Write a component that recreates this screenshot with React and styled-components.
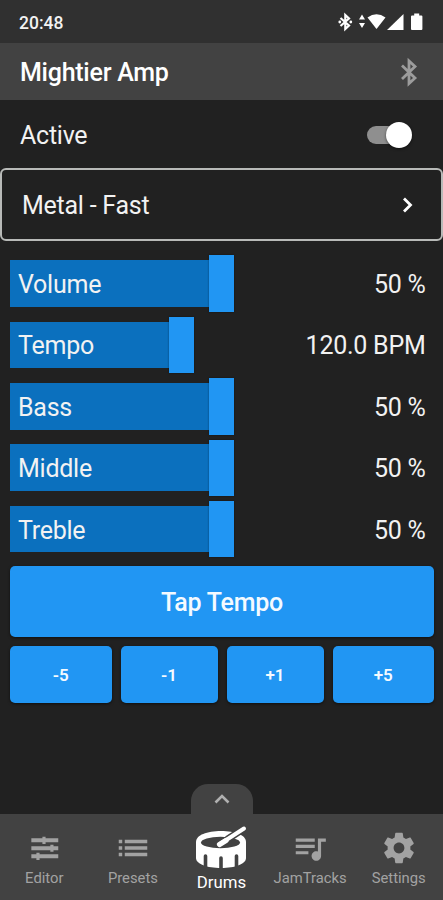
import React from "react";
import styled, { createGlobalStyle } from "styled-components";

const GlobalStyle = createGlobalStyle`
  * { box-sizing: border-box; }
  body { margin: 0; background: #212121; }
  button { border: 0; padding: 0; background: none; color: inherit; font: inherit; letter-spacing: inherit; }
`;

const Screen = styled.div`
  width: 443px;
  height: 900px;
  display: flex;
  flex-direction: column;
  overflow: hidden;
  background: #212121;
  color: #f2f2f2;
  font-family: Roboto, sans-serif;
  font-size: 25px;
  letter-spacing: -0.25px;
  white-space: nowrap;
`;

const StatusBar = styled.div`
  height: 43px;
  flex: none;
  display: flex;
  align-items: center;
  justify-content: space-between;
  padding: 2px 19px 0 19px;
  background: #303030;
  font-size: 17.5px;
  font-weight: 500;
  letter-spacing: 0;
`;

const StatusIcons = styled.svg`
  width: 88px;
  height: 20px;
  margin-bottom: 2px;
`;

const AppBar = styled.header`
  height: 57px;
  flex: none;
  display: flex;
  align-items: center;
  justify-content: space-between;
  padding: 0 20px;
  background: #424242;
`;

const Title = styled.h1`
  margin: 0;
  padding-top: 2px;
  font-size: 25px;
  font-weight: 500;
  color: #fff;
`;

const BluetoothIcon = styled.svg`
  width: 28px;
  height: 30px;
  color: #9c9c9c;
`;

const ActiveRow = styled.div`
  height: 68px;
  flex: none;
  display: flex;
  align-items: center;
  justify-content: space-between;
  padding: 2px 31px 0 20px;
`;

const SwitchTrack = styled.button`
  width: 43px;
  height: 18px;
  margin-right: 2px;
  display: flex;
  align-items: center;
  justify-content: flex-end;
  border-radius: 9px;
  background: #8f8f8f;
`;

const SwitchThumb = styled.span`
  flex: none;
  width: 26px;
  height: 26px;
  margin-right: -2px;
  border-radius: 50%;
  background: #fff;
  box-shadow: 0 1px 3px #0008;
`;

const StyleSelector = styled.button`
  width: 443px;
  height: 73px;
  flex: none;
  display: flex;
  align-items: center;
  justify-content: space-between;
  padding: 0 25px 0 20px;
  border: 2px solid #b8bab8;
  border-radius: 6px;
`;

const SelectorLabel = styled.span`
  padding-top: 2px;
`;

const Chevron = styled.svg`
  width: 16px;
  height: 18px;
`;

const SliderList = styled.div`
  display: flex;
  flex-direction: column;
  gap: 5px;
  padding: 14.4px 9px 0 10px;
`;

const SliderRow = styled.div`
  height: 56.4px;
  display: grid;
  align-items: center;
  & > * { grid-area: 1 / 1; }
`;

const SliderBar = styled.div`
  display: flex;
  align-items: center;
`;

const SliderFill = styled.div`
  height: 46.6px;
  background: #0b70be;
`;

const SliderThumb = styled.div`
  width: 25.2px;
  height: 56.4px;
  background: #2196f3;
  box-shadow: 0 0 2px #0006;
`;

const SliderText = styled.div`
  display: flex;
  justify-content: space-between;
  padding: 2px 8.5px 0 8px;
  z-index: 1;
`;

const ButtonArea = styled.div`
  display: flex;
  flex-direction: column;
  gap: 9.5px;
  padding: 9px 9px 0 10px;
`;

const BlueButton = styled.button`
  height: ${(p) => (p.$large ? "70.5px" : "57px")};
  padding-top: ${(p) => (p.$large ? "2px" : "0")};
  border-radius: 5px;
  background: #2196f3;
  color: #f4faff;
  font-size: ${(p) => (p.$large ? "25px" : "17px")};
  font-weight: ${(p) => (p.$large ? 500 : 600)};
  letter-spacing: ${(p) => (p.$large ? "-0.25px" : "0")};
  box-shadow: 0 1px 3px #0008;
`;

const StepRow = styled.div`
  display: grid;
  grid-template-columns: 101.5px 97px 97px 101.5px;
  justify-content: space-between;
`;

const Bottom = styled.footer`
  margin-top: auto;
  display: flex;
  flex-direction: column;
  align-items: center;
`;

const DrawerHandle = styled.button`
  width: 62px;
  height: 30px;
  display: flex;
  justify-content: center;
  padding-top: 9px;
  border-radius: 17px 17px 0 0;
  background: #424242;
  color: #b0b0b0;
`;

const HandleArrow = styled.svg`
  width: 18px;
  height: 12px;
`;

const NavBar = styled.nav`
  width: 443px;
  height: 86px;
  display: grid;
  grid-template-columns: repeat(5, 1fr);
  background: #424242;
`;

const NavItem = styled.button`
  display: flex;
  flex-direction: column;
  align-items: center;
  gap: ${(p) => (p.$active ? "2px" : "1px")};
  padding-top: ${(p) => (p.$active ? "9px" : "15px")};
  color: ${(p) => (p.$active ? "#fff" : "#a2a2a2")};
  font-size: ${(p) => (p.$active ? "16.8px" : "14.8px")};
  line-height: 20px;
  letter-spacing: 0;
`;

const NavIcon = styled.svg`
  width: 38px;
  height: 38px;
`;

const DrumIcon = styled.svg`
  width: 54px;
  height: 47px;
`;

const sliders = [
  { label: "Volume", value: "50 %", fill: 198.5 },
  { label: "Tempo", value: "120.0 BPM", fill: 159 },
  { label: "Bass", value: "50 %", fill: 198.5 },
  { label: "Middle", value: "50 %", fill: 198.5 },
  { label: "Treble", value: "50 %", fill: 198.5 },
];

const icons = {
  Editor: (
    <path d="M4 5.900h7v-1h2v1h8v2.500h-8v1h-2v-1H4zm0 5h12v-1h2v1h3v2.500h-3v1h-2v-1H4zm0 5.100h3.200v-1h2v1H21v2.500H9.200v1h-2v-1H4z" />
  ),
  Presets: (
    <path d="M3 13.100h2.200v-2.200H3zm0 4.100h2.200V15H3zM3 9h2.200V6.800H3zm3.800 4.100H21v-2.200H6.800zm0 4.100H21V15H6.800zm0-10.400V9H21V6.800z" />
  ),
  JamTracks: (
    <path d="M15 6H3v2h12V6zm0 4H3v2h12v-2zM3 16h8v-2H3v2zM17 6v8.180c-.31-.11-.65-.18-1-.18-1.660 0-3 1.340-3 3s1.340 3 3 3 3-1.340 3-3V8h3V6h-5z" />
  ),
  Settings: (
    <path d="M19.140 12.940c.04-.3.06-.61.06-.94 0-.32-.02-.64-.07-.94l2.030-1.580c.18-.14.23-.41.12-.61l-1.920-3.320c-.12-.22-.37-.29-.59-.22l-2.390.96c-.5-.38-1.030-.7-1.620-.94l-.36-2.540c-.04-.24-.24-.41-.48-.41h-3.840c-.24 0-.43.17-.47.41l-.36 2.540c-.59.24-1.130.57-1.620.94l-2.390-.96c-.22-.08-.47 0-.59.22L2.740 8.870c-.12.21-.08.47.12.61l2.030 1.580c-.05.3-.09.63-.09.94s.02.64.07.94l-2.030 1.580c-.18.14-.23.41-.12.61l1.920 3.320c.12.22.37.29.59.22l2.390-.96c.5.38 1.030.7 1.620.94l.36 2.540c.05.24.24.41.48.41h3.840c.24 0 .44-.17.47-.41l.36-2.540c.59-.24 1.130-.56 1.620-.94l2.390.96c.22.08.47 0 .59-.22l1.920-3.320c.12-.22.07-.47-.12-.61l-2.010-1.580zM12 15.400c-1.880 0-3.400-1.520-3.400-3.400s1.520-3.400 3.400-3.400 3.400 1.520 3.400 3.400-1.520 3.400-3.400 3.400z" />
  ),
};

function Drum() {
  return (
    <DrumIcon viewBox="0 0 54 47">
      <path
        fill="currentColor"
        d="M2 19C2 12 13 8 27 8s25 4 25 11v16c0 6-11 10-25 10S2 41 2 35z"
      />
      <ellipse cx="26.500" cy="19.500" rx="19.500" ry="5.800" fill="#424242" />
      <path d="M33 16.500L50 5.500" stroke="#424242" strokeWidth="7" />
      <path d="M26 21L50 5.500" stroke="currentColor" strokeWidth="4" strokeLinecap="round" />
      <path d="M25.500 21.500L32 17.500" stroke="currentColor" strokeWidth="5.200" strokeLinecap="round" />
      <path
        d="M11.500 33v11M27 35v11M42.500 33v11"
        stroke="#424242"
        strokeWidth="3.600"
        strokeLinecap="round"
      />
    </DrumIcon>
  );
}

function NavEntry({ label, active }) {
  return (
    <NavItem $active={active}>
      {active ? (
        <Drum />
      ) : (
        <NavIcon viewBox="0 0 24 24" fill="currentColor">
          {icons[label]}
        </NavIcon>
      )}
      <span>{label}</span>
    </NavItem>
  );
}

export default function App() {
  return (
    <>
      <GlobalStyle />
      <Screen>
        <StatusBar>
          <span>20:48</span>
          <StatusIcons viewBox="336 12 88 20" fill="#fff">
            <path
              d="M340.500 18l8.500 7.500-3.700 3.500V15l3.700 3.500-8.500 7.500"
              fill="none"
              stroke="#fff"
              strokeWidth="2.200"
            />
            <circle cx="339.800" cy="22" r="1.400" />
            <circle cx="350.800" cy="22" r="1.400" />
            <path d="M362 14.500l3 5h-6zM362 28l-3-5h6z" />
            <path d="M367.500 17.500Q376.500 11 385.500 17.500L376.500 29z" />
            <path d="M403.500 14V30h-16.500z" />
            <path d="M412 15.500h2.200v-2h5v2h2.200q1 0 1 1v12.500q0 1-1 1H412q-1 0-1-1V16.500q0-1 1-1z" />
          </StatusIcons>
        </StatusBar>
        <AppBar>
          <Title>Mightier Amp</Title>
          <BluetoothIcon viewBox="0 0 28 30" fill="none" stroke="currentColor" strokeWidth="2.800">
            <path d="M7 8.500l13 12.500-6 5.500V4L20 9.500l-13 12.500" />
          </BluetoothIcon>
        </AppBar>
        <ActiveRow>
          <span>Active</span>
          <SwitchTrack aria-label="Active">
            <SwitchThumb />
          </SwitchTrack>
        </ActiveRow>
        <StyleSelector>
          <SelectorLabel>Metal - Fast</SelectorLabel>
          <Chevron viewBox="0 0 16 18" fill="none" stroke="#fff" strokeWidth="2.800">
            <path d="M4 2.500l6.500 6.500L4 15.500" />
          </Chevron>
        </StyleSelector>
        <SliderList>
          {sliders.map(({ label, value, fill }) => (
            <SliderRow key={label}>
              <SliderBar>
                <SliderFill style={{ width: fill }} />
                <SliderThumb />
              </SliderBar>
              <SliderText>
                <span>{label}</span>
                <span>{value}</span>
              </SliderText>
            </SliderRow>
          ))}
        </SliderList>
        <ButtonArea>
          <BlueButton $large>Tap Tempo</BlueButton>
          <StepRow>
            <BlueButton>-5</BlueButton>
            <BlueButton>-1</BlueButton>
            <BlueButton>+1</BlueButton>
            <BlueButton>+5</BlueButton>
          </StepRow>
        </ButtonArea>
        <Bottom>
          <DrawerHandle aria-label="Expand">
            <HandleArrow viewBox="0 0 18 12" fill="none" stroke="currentColor" strokeWidth="2.600">
              <path d="M2.500 9.500L9 3l6.500 6.500" />
            </HandleArrow>
          </DrawerHandle>
          <NavBar>
            <NavEntry label="Editor" />
            <NavEntry label="Presets" />
            <NavEntry label="Drums" active />
            <NavEntry label="JamTracks" />
            <NavEntry label="Settings" />
          </NavBar>
        </Bottom>
      </Screen>
    </>
  );
}
